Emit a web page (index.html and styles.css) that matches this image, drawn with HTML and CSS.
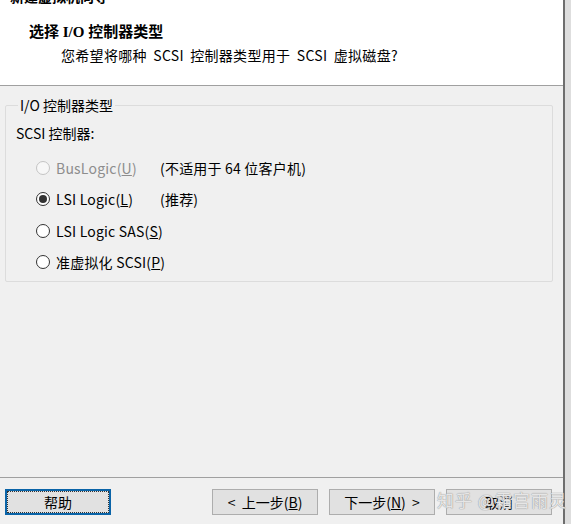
FILE: index.html
```html
<!DOCTYPE html>
<html lang="zh-CN">
<head>
  <meta charset="UTF-8">
  <title>新建虚拟机向导</title>
  <link rel="stylesheet" href="styles.css">
</head>
<body>
  <div class="dialog">
    <div class="header">
      <div class="caption">新建虚拟机向导</div>
      <div class="title">选择 I/O 控制器类型</div>
      <div class="subtitle">您希望将哪种 SCSI 控制器类型用于 SCSI 虚拟磁盘?</div>
    </div>

    <div class="content">
      <fieldset class="group">
        <legend>I/O 控制器类型</legend>
        <div class="group-label">SCSI 控制器:</div>
        <div class="options">
          <label class="option disabled">
            <span class="radio"></span>
            <span class="option-text">BusLogic(<u>U</u>)</span>
          </label>
          <span class="note">(不适用于 64 位客户机)</span>

          <label class="option">
            <span class="radio checked"></span>
            <span class="option-text">LSI Logic(<u>L</u>)</span>
          </label>
          <span class="note">(推荐)</span>

          <label class="option wide">
            <span class="radio"></span>
            <span class="option-text">LSI Logic SAS(<u>S</u>)</span>
          </label>

          <label class="option wide">
            <span class="radio"></span>
            <span class="option-text">准虚拟化 SCSI(<u>P</u>)</span>
          </label>
        </div>
      </fieldset>
    </div>

    <div class="footer">
      <button class="btn focused"><span>帮助</span></button>
      <div class="spacer"></div>
      <button class="btn">&lt;&nbsp; 上一步(<u>B</u>)</button>
      <button class="btn">下一步(<u>N</u>)&nbsp; &gt;</button>
      <button class="btn">取消</button>
      <div class="watermark">知乎 @霜宫雨灵</div>
    </div>
  </div>
</body>
</html>
```

FILE: styles.css
```css
html, body {
  margin: 0;
  padding: 0;
}
body {
  width: 571px;
  height: 524px;
  overflow: hidden;
  background: #dedede;
  font-family: "Noto Sans CJK SC", "Liberation Sans", sans-serif;
  font-size: 14px;
  color: #000;
}
.dialog {
  width: 563px;
  height: 524px;
  border-right: 2px solid #6e6e6e;
  background: #f0f0f0;
  display: flex;
  flex-direction: column;
}
.header {
  height: 85px;
  background: #fff;
  border-bottom: 1px solid #a0a0a0;
  flex-shrink: 0;
}
.caption {
  font-weight: bold;
  line-height: 17px;
  margin-top: -12px;
  padding-left: 10px;
}
.title {
  font-family: "Liberation Serif", "Noto Sans CJK SC", serif;
  font-weight: bold;
  font-size: 15px;
  line-height: 20px;
  margin-top: 17px;
  padding-left: 29px;
}
.subtitle {
  line-height: 20px;
  margin-top: 3px;
  padding-left: 61px;
  word-spacing: 3px;
  letter-spacing: 0.3px;
}
.content {
  flex: 1;
  border-bottom: 1px solid #a0a0a0;
}
.group {
  margin: 11px 10px 0 5px;
  padding: 0 0 6px 10px;
  height: 185px;
  box-sizing: border-box;
  border: 1px solid #dcdcdc;
  border-radius: 2px;
}
.group legend {
  padding: 0 2px;
  margin-left: 2px;
  line-height: 16px;
}
.group-label {
  line-height: 20px;
  margin-top: 10px;
}
.options {
  display: grid;
  grid-template-columns: 124px auto;
  grid-auto-rows: 31.5px;
  align-items: center;
  margin-top: 9px;
  padding-left: 20px;
}
.option {
  display: flex;
  align-items: center;
  gap: 6px;
}
.option.wide {
  grid-column: 1 / 3;
}
.option-text {
  line-height: 18px;
  letter-spacing: 0.2px;
}
.option.disabled .option-text {
  color: #8d8d8d;
}
.radio {
  width: 14px;
  height: 14px;
  box-sizing: border-box;
  border: 1px solid #333;
  border-radius: 50%;
  background: #fff;
  display: flex;
  align-items: center;
  justify-content: center;
}
.radio.checked::after {
  content: "";
  width: 8px;
  height: 8px;
  border-radius: 50%;
  background: #333;
}
.option.disabled .radio {
  border-color: #c4c4c4;
  background: #f7f7f7;
}
.note {
  line-height: 18px;
  letter-spacing: 0.2px;
}
.footer {
  height: 46px;
  flex-shrink: 0;
  display: flex;
  align-items: flex-start;
  gap: 11px;
  padding: 11px 11px 0 5px;
  box-sizing: border-box;
  position: relative;
}
.spacer {
  flex: 1;
}
.btn {
  width: 106px;
  height: 26px;
  padding: 0;
  font-family: inherit;
  font-size: 14px;
  color: #000;
  background: #e1e1e1;
  border: 1px solid #adadad;
  display: flex;
  align-items: center;
  justify-content: center;
}
.btn.focused {
  border: 2px solid #0a64a8;
}
.btn.focused span {
  display: flex;
  align-items: center;
  justify-content: center;
  width: 100%;
  height: 100%;
  box-sizing: border-box;
  border: 1px dotted #333;
}
.watermark {
  position: absolute;
  left: 437px;
  top: 10px;
  font-size: 17px;
  line-height: 24px;
  white-space: nowrap;
  color: rgba(255, 255, 255, 0.75);
  text-shadow: 0 0 1px #9a9a9a, 0 0 1px #9a9a9a;
  letter-spacing: 1px;
  pointer-events: none;
}
```
